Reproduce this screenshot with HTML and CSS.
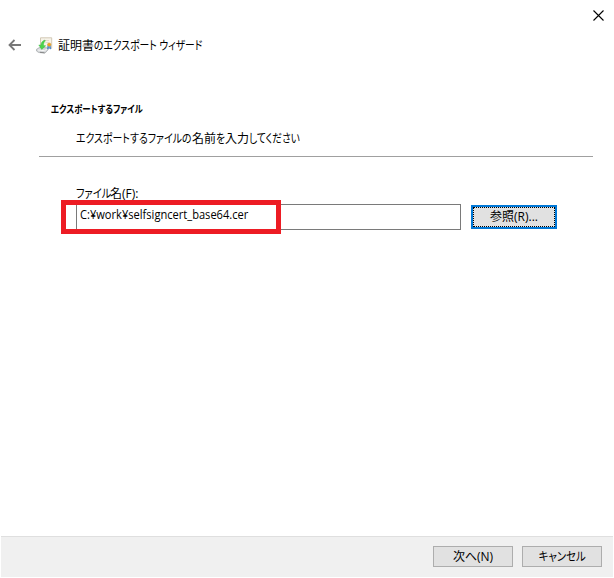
FILE: index.html
```html
<!DOCTYPE html>
<html lang="ja">
<head>
<meta charset="utf-8">
<title>証明書のエクスポート ウィザード</title>
<link rel="stylesheet" href="styles.css">
</head>
<body>
<main class="wizard">
  <div class="titlebar">
    <svg class="close" viewBox="0 0 11 11"><path d="M.5 .5 10.5 10.5M10.5 .5 .5 10.5"/></svg>
  </div>
  <header class="header">
    <svg class="back" viewBox="0 0 14 12"><path d="M13 6H2M6.5 1 1.5 6l5 5"/></svg>
    <svg class="cert" viewBox="0 0 17 17">
      <path d="M4.5 .8h11.2v10.4H4.5z" fill="#f7f3e9" stroke="#d2c8b5"/>
      <path d="M7 3.5h6M9.5 5.5h3" stroke="#e3dccd"/>
      <path d="M.5 12.3 4 10.2l7.5.8.8 1.5-3.3 3.6-6.3-.6L.5 14z" fill="#d5d8da" stroke="#a1a5a8" stroke-width=".7"/>
      <path d="m2 13 6.6.7 2.4-1.8" stroke="#f8f8f8" fill="none"/>
      <path d="m4 15.3 4.5.5" stroke="#777" stroke-width=".8"/>
      <path d="M9 3C6.2 4 5 5.8 5 8.2L2.8 8l2.900 4.400 4-3.600-2.200-.3C7.400 6.500 8 5 9.300 4z" fill="#4bd34b" stroke="#29b634" stroke-width=".4"/>
      <path d="m12 8.500-.4 3.500 1-.8zM14 8.500l.8 3.500-1.200-.8z" fill="#3e83cc" stroke="#3e83cc" stroke-width=".7"/>
      <circle cx="13.200" cy="7.600" r="1.700" fill="#eda51d" stroke="#cf851d" stroke-width=".4"/>
    </svg>
    <h1 class="title">証明書<span class="kana title-kana">のエクスポート ウィザード</span></h1>
  </header>
  <section class="intro">
    <h2 class="step"><span class="kana step-kana">エクスポートするファイル</span></h2>
    <p class="lead"><span class="kana lead-a">エクスポートするファイルの</span>名前<span class="kana lead-b">を</span>入力<span class="kana lead-c">してください</span></p>
  </section>
  <section class="form">
    <label class="label" for="file"><span class="kana label-kana">ファイル</span>名(F):</label>
    <div class="row">
      <div class="field" id="file"><span class="path">C:¥work¥selfsigncert_base64.cer</span><span class="marker"></span></div>
      <button class="button browse"><span class="caption">参照(R)...</span></button>
    </div>
  </section>
  <footer class="footer">
    <button class="button"><span class="caption">次へ(N)</span></button>
    <button class="button"><span class="kana cancel-kana">キャンセル</span></button>
  </footer>
</main>
</body>
</html>
```
FILE: styles.css
```css
* { box-sizing: border-box; }
body {
  margin: 0;
  background: #fff;
  color: #000;
  font: 12px/16px "Open Sans", "Noto Sans CJK JP", sans-serif;
}
h1, h2, p { margin: 0; font-size: 12px; font-weight: 400; white-space: nowrap; }
svg { display: block; flex: none; }
.wizard { height: 578px; display: flex; flex-direction: column; padding: 0 1px 1px; }
.kana {
  display: inline-block;
  white-space: nowrap;
  font-feature-settings: "palt";
  transform-origin: 0 50%;
}
.titlebar { height: 30px; padding: 10px 9.5px 0 0; display: flex; justify-content: flex-end; }
.close { width: 11px; height: 11px; fill: none; stroke: #000; stroke-width: 1.1; }
.header { height: 30px; display: flex; align-items: center; padding-left: 7px; }
.back { width: 14px; height: 12px; fill: none; stroke: #777; stroke-width: 1.8; }
.cert { width: 17px; height: 17px; margin: 0 5px 0 14px; }
.title { padding-top: 2px; }
.title-kana { transform: scaleX(.816); }
.intro { height: 97px; margin: 0 20px 0 38px; padding: 41px 0 0 12px; border-bottom: 1px solid #a0a0a0; }
.step { font-size: 10px; font-weight: 700; height: 16px; }
.step-kana { transform: scaleX(.84); }
.lead { padding: 14px 0 0 25px; display: flex; }
.lead-a { width: 116px; transform: scaleX(.825); }
.lead-b { width: 9px; transform: scaleX(.8); }
.lead-c { width: 52px; transform: scaleX(.81); }
.form { padding: 29px 0 0 75px; }
.label { display: flex; height: 18px; }
.label-kana { width: 34px; transform: scaleX(.85); }
.row { display: flex; gap: 10px; }
.field { position: relative; width: 385px; height: 26px; border: 1px solid #7a7a7a; padding: 2px 3px; }
.path { display: block; white-space: nowrap; transform: scaleX(.925); transform-origin: 0 50%; }
.marker { position: absolute; left: -16px; top: -5px; width: 220px; height: 34px; border: 5px solid #ed1c24; }
.button {
  width: 80px;
  height: 21px;
  padding: 0;
  border: 1px solid #adadad;
  border-radius: 0;
  background: #e1e1e1;
  color: #000;
  font: inherit;
  display: flex;
  align-items: center;
  justify-content: center;
}
.browse { width: 86px; height: 24px; margin-top: 1px; border: 2px solid #0078d7; outline: 1px dotted #000; outline-offset: -3px; }
.cancel-kana { transform-origin: center; transform: scaleX(.87); }
.footer {
  margin-top: auto;
  height: 41px;
  padding: 9px 11px 0 0;
  border-top: 1px solid #dfdfdf;
  background: #f0f0f0;
  display: flex;
  justify-content: flex-end;
  gap: 9px;
}
```
